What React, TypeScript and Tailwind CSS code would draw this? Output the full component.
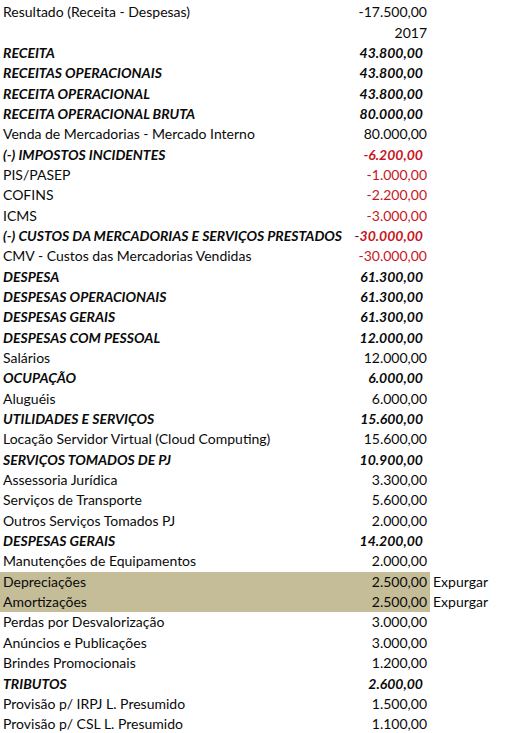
import React from "react";

type Row = {
  label: string;
  value?: string;
  bold?: boolean;
  red?: boolean;
  hl?: boolean;
  note?: string;
  darkMinus?: boolean;
};

const rows: Row[] = [
  { label: "Resultado (Receita - Despesas)", value: "-17.500,00" },
  { label: "", value: "2017" },
  { label: "RECEITA", value: "43.800,00", bold: true },
  { label: "RECEITAS OPERACIONAIS", value: "43.800,00", bold: true },
  { label: "RECEITA OPERACIONAL", value: "43.800,00", bold: true },
  { label: "RECEITA OPERACIONAL BRUTA", value: "80.000,00", bold: true },
  { label: "Venda de Mercadorias - Mercado Interno", value: "80.000,00" },
  { label: "(-) IMPOSTOS INCIDENTES", value: "-6.200,00", bold: true, red: true },
  { label: "PIS/PASEP", value: "-1.000,00", red: true },
  { label: "COFINS", value: "-2.200,00", red: true },
  { label: "ICMS", value: "-3.000,00", red: true },
  { label: "(-) CUSTOS DA MERCADORIAS E SERVIÇOS PRESTADOS", value: "30.000,00", bold: true, red: true, darkMinus: true },
  { label: "CMV - Custos das Mercadorias Vendidas", value: "-30.000,00", red: true },
  { label: "DESPESA", value: "61.300,00", bold: true },
  { label: "DESPESAS OPERACIONAIS", value: "61.300,00", bold: true },
  { label: "DESPESAS GERAIS", value: "61.300,00", bold: true },
  { label: "DESPESAS COM PESSOAL", value: "12.000,00", bold: true },
  { label: "Salários", value: "12.000,00" },
  { label: "OCUPAÇÃO", value: "6.000,00", bold: true },
  { label: "Aluguéis", value: "6.000,00" },
  { label: "UTILIDADES E SERVIÇOS", value: "15.600,00", bold: true },
  { label: "Locação Servidor Virtual (Cloud Computing)", value: "15.600,00" },
  { label: "SERVIÇOS TOMADOS DE PJ", value: "10.900,00", bold: true },
  { label: "Assessoria Jurídica", value: "3.300,00" },
  { label: "Serviços de Transporte", value: "5.600,00" },
  { label: "Outros Serviços Tomados PJ", value: "2.000,00" },
  { label: "DESPESAS GERAIS", value: "14.200,00", bold: true },
  { label: "Manutenções de Equipamentos", value: "2.000,00" },
  { label: "Depreciações", value: "2.500,00", hl: true, note: "Expurgar" },
  { label: "Amortizações", value: "2.500,00", hl: true, note: "Expurgar" },
  { label: "Perdas por Desvalorização", value: "3.000,00" },
  { label: "Anúncios e Publicações", value: "3.000,00" },
  { label: "Brindes Promocionais", value: "1.200,00" },
  { label: "TRIBUTOS", value: "2.600,00", bold: true },
  { label: "Provisão p/ IRPJ L. Presumido", value: "1.500,00" },
  { label: "Provisão p/ CSL L. Presumido", value: "1.100,00" },
];

export default function App() {
  return (
    <div
      className="w-[513px] h-[733px] bg-white overflow-hidden pt-[2px] text-[14px] text-[#0a0a0a]"
      style={{ fontFamily: 'Lato, "Liberation Sans", Arial, sans-serif' }}
    >
      {rows.map((r, i) => (
        <div key={i} className="flex h-[20.35px] items-center leading-none">
          <div
            className={`w-[430px] h-full flex items-center ${r.hl ? "bg-[#c4bd97]" : ""}`}
          >
            <div
              className={`w-[330px] pl-[3px] whitespace-nowrap overflow-visible ${
                r.bold ? "font-bold italic" : ""
              }`}
            >
              {r.label}
            </div>
            <div
              className={`flex-1 text-right ${r.bold ? "font-bold italic pr-[7px]" : "pr-[3px]"} ${
                r.red ? "text-[#c8161d]" : ""
              }`}
            >
              {r.darkMinus && <span className="font-normal not-italic text-[#5a1010]">-</span>}
              {r.value}
            </div>
          </div>
          {r.note && <div className="pl-[3px] whitespace-nowrap">{r.note}</div>}
        </div>
      ))}
    </div>
  );
}
